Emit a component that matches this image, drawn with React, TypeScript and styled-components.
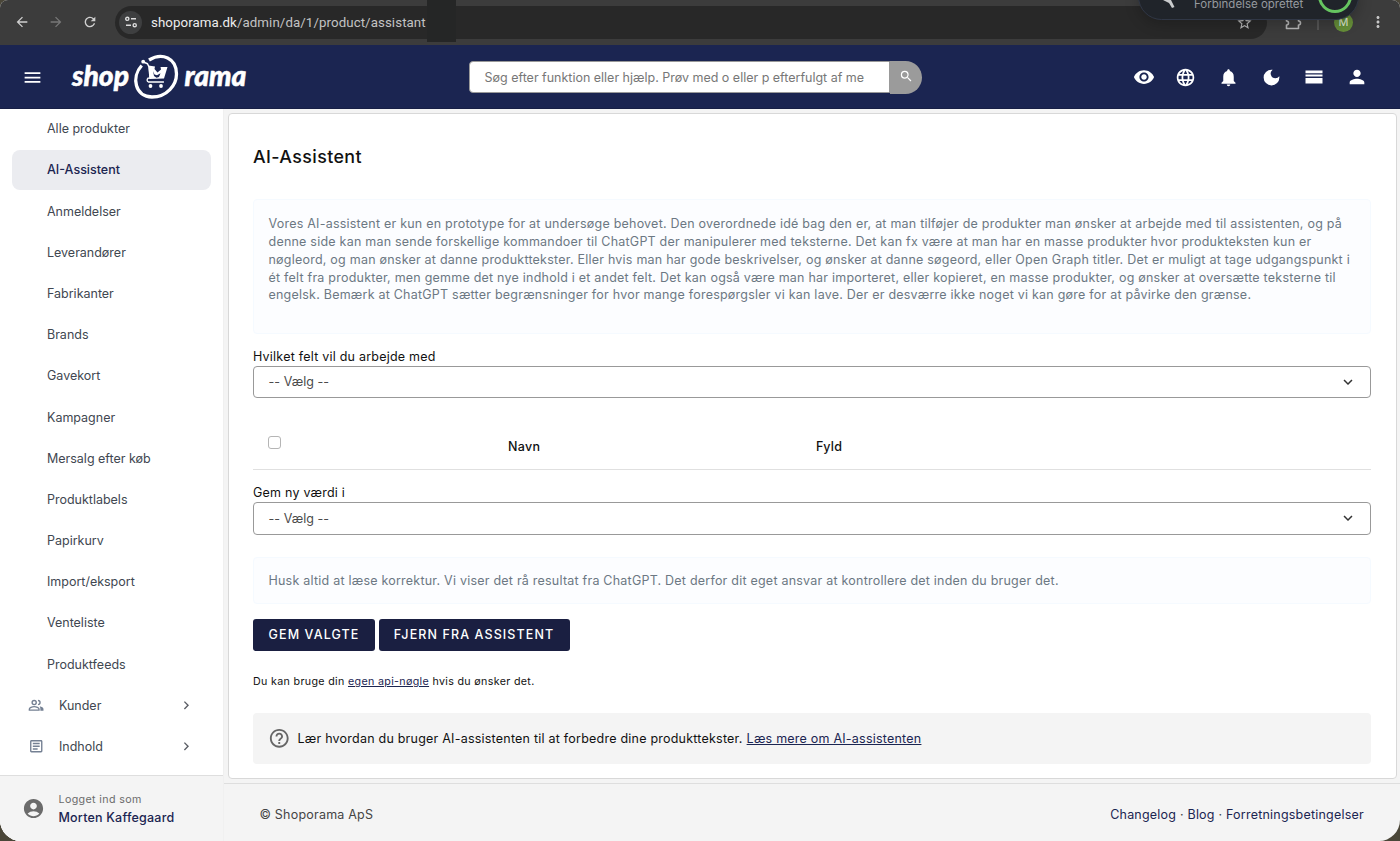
import React from "react";
import styled, { createGlobalStyle, css } from "styled-components";
import {
  MdMenu, MdVisibility, MdLanguage, MdNotifications, MdDarkMode, MdPerson, MdSearch,
  MdOutlineArticle, MdAccountCircle, MdHelpOutline, MdExpandMore,
  MdChevronRight, MdArrowBack, MdArrowForward, MdRefresh, MdStarBorder, MdMoreVert,
} from "react-icons/md";

const navy = "#1b2551";

const Global = createGlobalStyle`
  *, *::before, *::after { box-sizing: border-box; }
  body { margin: 0; background: #4a4638; font-family: Inter, "Liberation Sans", sans-serif; font-size: 12.49px; color: #111; }
  button, input { font: inherit; }
  a { color: ${navy}; }
  svg { display: block; flex: none; }
`;

const Window = styled.div`
  width: 1400px; height: 841px; overflow: hidden; display: flex; flex-direction: column;
  border-radius: 8px 8px 21px 21px; background: #f4f4f4; position: relative;
`;

/* Browser chrome */
const BrowserBar = styled.div`
  height: 44.5px; flex: none; background: #3c3c3c; color: #c7c7c7; display: flex; align-items: center;
  padding-left: 14px;
`;
const NavIcon = styled.span<{ $dim?: boolean }>`
  width: 16px; margin-right: 18px; font-size: 16px; color: ${(p) => (p.$dim ? "#777" : "#cfcfcf")};
`;
const AddressBar = styled.div`
  width: 1152px; height: 33px; border-radius: 17px; background: #282828; display: flex; align-items: center;
  padding: 0 14px 0 4px; margin-left: -1px;
`;
const SiteInfo = styled.span`
  width: 23px; height: 23px; border-radius: 50%; background: #3e3f40; display: grid; place-items: center;
  margin-right: 9px;
`;
const Url = styled.span`
  font-family: Roboto, "Liberation Sans", sans-serif; font-size: 13.3px; color: #c3c3c3; letter-spacing: 0.08px; white-space: nowrap;
  width: 275px;
  b { font-weight: 400; color: #ededed; }
`;
const UrlPatch = styled.span`width: 29px; height: 42px; margin-left: 1px; background: #252626; align-self: flex-start; margin-top: -6px; z-index: 1;`;
const StarSlot = styled.span`margin-left: auto; font-size: 17px; color: #b5b5b5;`;
const BarTools = styled.div`
  display: flex; align-items: center; flex: 1; padding-left: 18px; font-size: 18px;
`;
const BarDivider = styled.i`width: 2px; height: 15px; background: #555; margin: 0 15px 0 15px;`;
const Avatar = styled.span`
  width: 19px; height: 19px; border-radius: 50%; background: #658d38; color: #dce7d0; font-size: 11px;
  display: grid; place-items: center; margin-right: 16px;
`;
const Toast = styled.div`
  position: absolute; top: -27px; left: 1138px; width: 221px; height: 47px; border-radius: 24px;
  background: #20242a; border: 1px solid #303746; color: #969a9f; font-size: 11.5px;
  box-shadow: 0 4px 14px rgba(0,0,0,.22); z-index: 3;
`;
const ToastText = styled.span`position: absolute; left: 55px; top: 23px; white-space: nowrap; letter-spacing: 0;`;
const ToastRing = styled.i`
  position: absolute; right: 6px; top: 5px; width: 34px; height: 34px; border: 3.5px solid #66c560; border-radius: 50%;
`;
const ToastMark = styled.svg`position: absolute; left: 24px; top: 26px;`;

/* Application header */
const Header = styled.header`
  height: 64.5px; flex: none; background: ${navy}; color: #fff; display: flex; align-items: center;
  padding: 1.5px 0 0 22px; border-bottom: 1px solid #171f45;
`;
const MenuButton = styled.span`font-size: 21px; margin-right: 28px;`;
const Search = styled.div`display: flex; margin-left: 220px; width: 453px; height: 33px;`;
const SearchField = styled.div`
  width: 421px; height: 32px; background: #fff; border: 1px solid #999; border-radius: 4px 0 0 4px;
  padding: 0 20px 0 14.5px; color: #777;
  span { display: block; white-space: nowrap; line-height: 31px; letter-spacing: 0; }
`;
const SearchButton = styled.span`
  width: 32px; height: 33px; background: #9b9b9b; border-radius: 0 17px 17px 0; display: grid; place-items: center;
  font-size: 14.5px; padding-bottom: 1px;
`;
const HeaderIcons = styled.div`
  margin-left: auto; display: flex; align-items: center; padding-right: 21.5px; font-size: 20px;
  span { width: 43px; display: flex; justify-content: center; }
  span:first-child { margin-right: -2px; }
`;

/* Layout */
const Body = styled.div`flex: 1; display: flex; min-height: 0;`;
const Sidebar = styled.aside`
  width: 223.5px; flex: none; background: #fff; display: flex; flex-direction: column;
  border-right: 1px solid #f0f0f0;
`;
const Nav = styled.nav`flex: 1; padding: 0 11.5px; overflow: hidden;`;
const NavItem = styled.div<{ $active?: boolean; $top?: boolean }>`
  height: 39.4px; margin-bottom: 1.8px; border-radius: 8px; display: flex; align-items: center;
  padding: 0 17px 0 ${(p) => (p.$top ? 16 : 35.5)}px; color: #414751; white-space: nowrap;
  span { flex: 1; }
  ${(p) => p.$active && css`background: #ebecf0; color: ${navy}; font-weight: 500;`}
  svg:first-child { color: #748093; font-size: 16.5px; margin-right: 15px; }
  svg:last-child { color: #5c5f66; font-size: 16.5px; }
`;
const UserPanel = styled.div`
  height: 66px; flex: none; border-top: 1px solid #dedede; background: #f4f4f4; display: flex; align-items: center;
  padding-left: 21.5px; color: #6b6b6b; font-size: 23px;
`;
const UserText = styled.div`
  margin-left: 14px; font-size: 10.7px; line-height: 18px; letter-spacing: .36px;
  strong { display: block; font-size: 12.49px; font-weight: 500; color: ${navy}; letter-spacing: .22px; }
`;
const Main = styled.main`flex: 1; display: flex; flex-direction: column; padding-top: 4px; min-width: 0;`;
const Card = styled.section`
  height: 666px; flex: none; margin: 0 3.5px 0 4px; border: 1px solid #d8d8d8; border-radius: 4px;
  background: #fff; padding: 0 25px 0 24.5px; display: flex; flex-direction: column; letter-spacing: .232px;
`;
const Title = styled.h1`
  margin: 31px 0 30px; height: 24px; line-height: 24px; font-size: 17.84px; font-weight: 450; letter-spacing: .4px;
`;
const Info = styled.div<{ $h: number; $top?: number; $pad?: number }>`
  height: ${(p) => p.$h}px; margin-top: ${(p) => p.$top ?? 0}px; flex: none; background: #fcfdff; border: 1px solid #f5faff; border-radius: 4px;
  padding: ${(p) => p.$pad ?? 15}px 14.5px 0; color: #6c7883; line-height: 17.85px; white-space: nowrap;
`;
const Label = styled.label<{ $top: number }>`
  margin-top: ${(p) => p.$top}px; height: 18px; flex: none; line-height: 18px; color: #111;
`;
const Select = styled.div`
  height: 32.5px; flex: none; border: 1px solid #999; border-radius: 4px; display: flex; align-items: center;
  justify-content: space-between; padding: 0 13px 0 14.5px; color: #4b4b4b; letter-spacing: .05px;
  svg { font-size: 18px; color: #333; }
`;
const TableHead = styled.div`
  margin-top: 23.5px; height: 48px; flex: none; border-bottom: 1px solid #e0e0e0; display: grid;
  grid-template-columns: 255px 308px 1fr; font-weight: 500; letter-spacing: .3px; line-height: 50px;
`;
const Checkbox = styled.i`width: 13px; height: 13px; border: 1px solid #b5b5b5; border-radius: 3px; margin: 14.500px 0 0 14.500px;`;
const Buttons = styled.div`display: flex; gap: 3.5px; margin-top: 14.500px; flex: none;`;
const Button = styled.button<{ $w: number }>`
  width: ${(p) => p.$w}px; height: 32.500px; padding: 0; border: 0; border-radius: 3px; background: #1a1f41; color: #fff;
  font-weight: 500; letter-spacing: 1.115px; white-space: nowrap;
`;
const Note = styled.p`margin: 22px 0 21.500px; height: 18px; line-height: 18px; font-size: 10.7px; letter-spacing: .33px;`;
const Help = styled.div`
  height: 51.5px; flex: none; background: #f4f4f4; border-radius: 4px; display: flex; align-items: center;
  padding-left: 15px;
  svg { font-size: 22.5px; color: #666; margin-right: 7px; }
  a { margin-left: 4px; }
`;
const HelpText = styled.span`padding-top: 1px;`;
const Footer = styled.footer`
  flex: 1; margin-top: 4px; border-top: 1px solid #dedede; display: flex; align-items: center; justify-content: space-between;
  padding: 4px 36px 0 36px; color: #444; letter-spacing: .223px;
  a { text-decoration: none; }
`;

const Logo = () => (
  <svg width="178" height="48" viewBox="0 0 178 48" fill="#fff" overflow="visible">
    <g fontFamily="Lato, sans-serif" fontWeight="900" fontStyle="italic" fontSize="28.500" stroke="#fff" strokeWidth=".500">
      <text x="1" y="32.500" textLength="57" lengthAdjust="spacingAndGlyphs">shop</text>
      <text x="113.500" y="32.500" textLength="62" lengthAdjust="spacingAndGlyphs">rama</text>
    </g>
    <path d="M70.700 12.500C60 24 64 44 81 44C96 44 105.500 32 105.500 21C105.500 5 91-1 78 7" fill="none" stroke="#fff" strokeWidth="3.300" />
    <circle cx="72.200" cy="8.700" r="1.900" />
    <path d="M72.500 9l4 1.800 1.500 3.200 1 10.500" fill="none" stroke="#fff" strokeWidth="1.500" strokeLinecap="round" strokeLinejoin="round" />
    <path d="M77.500 12.500l6.500 1-.5 2.500 3 3.500 3.500-3-.5-2.500 7 0-3.500 11.500-14.500.5z" />
    <path d="M82 18l1.500 3.500 2.500.7 3.500-2-1.500 3.800-2.500.8-2.500-1.800z" fill={navy} />
    <path d="M79 25.200h-2q-2 2.300.5 3.800h15" fill="none" stroke="#fff" strokeWidth="1.300" strokeLinecap="round" />
    <circle cx="79.500" cy="33" r="1.900" /><circle cx="90" cy="33" r="1.900" />
  </svg>
);

const PeopleIcon = () => (
  <svg width="16.500" height="16.500" viewBox="0 0 24 24" fill="none" stroke="currentColor" strokeWidth="2">
    <circle cx="9" cy="8" r="3" />
    <path d="M2 19v-1.500c0-2 4-3.500 7-3.500s7 1.500 7 3.500V19z" />
    <path d="M14.500 5a3 3 0 0 1 0 6" />
    <path d="M17 13.500c3 .6 5.500 2 5.500 4V20H18v-2.500c0-1.600-.4-2.900-1-4z" fill="currentColor" stroke="none" />
  </svg>
);

const PuzzleIcon = () => (
  <svg width="17" height="18" viewBox="0 0 17 18" fill="none" stroke="#b5b5b5" strokeWidth="1.600" strokeLinejoin="round">
    <path d="M1.500 4.500H5a2 2 0 0 1 4 0h4.500V8a2 2 0 0 1 0 4v3.500h-12V12a2 2 0 0 0 0-4z" />
  </svg>
);

const products = [
  "Alle produkter", "AI-Assistent", "Anmeldelser", "Leverandører", "Fabrikanter", "Brands", "Gavekort", "Kampagner",
  "Mersalg efter køb", "Produktlabels", "Papirkurv", "Import/eksport", "Venteliste", "Produktfeeds",
];

const intro = [
  "Vores AI-assistent er kun en prototype for at undersøge behovet. Den overordnede idé bag den er, at man tilføjer de produkter man ønsker at arbejde med til assistenten, og på",
  "denne side kan man sende forskellige kommandoer til ChatGPT der manipulerer med teksterne. Det kan fx være at man har en masse produkter hvor produkteksten kun er",
  "nøgleord, og man ønsker at danne produkttekster. Eller hvis man har gode beskrivelser, og ønsker at danne søgeord, eller Open Graph titler. Det er muligt at tage udgangspunkt i",
  "ét felt fra produkter, men gemme det nye indhold i et andet felt. Det kan også være man har importeret, eller kopieret, en masse produkter, og ønsker at oversætte teksterne til",
  "engelsk. Bemærk at ChatGPT sætter begrænsninger for hvor mange forespørgsler vi kan lave. Der er desværre ikke noget vi kan gøre for at påvirke den grænse.",
];

export default function App() {
  return (
    <>
      <Global />
      <Window>
        <BrowserBar>
          <NavIcon><MdArrowBack /></NavIcon>
          <NavIcon $dim><MdArrowForward /></NavIcon>
          <NavIcon><MdRefresh /></NavIcon>
          <AddressBar>
            <SiteInfo>
              <svg width="12" height="12" viewBox="0 0 12 12" fill="none" stroke="#ddd" strokeWidth="1.400">
                <circle cx="2.300" cy="2.800" r="1.600" /><path d="M6 2.800h5M1 9.200h5" /><circle cx="9.700" cy="9.200" r="1.600" />
              </svg>
            </SiteInfo>
            <Url><b>shoporama.dk</b>/admin/da/1/product/assistant</Url>
            <UrlPatch />
            <StarSlot><MdStarBorder /></StarSlot>
          </AddressBar>
          <BarTools>
            <PuzzleIcon />
            <BarDivider />
            <Avatar>M</Avatar>
            <MdMoreVert />
          </BarTools>
        </BrowserBar>
        <Toast>
          <ToastMark width="14" height="9" viewBox="0 0 14 9" fill="#c8cacc"><path d="M0 0h8l3.500 7-2.500 1-3-5z" /></ToastMark>
          <ToastText>Forbindelse oprettet</ToastText>
          <ToastRing />
        </Toast>
        <Header>
          <MenuButton><MdMenu /></MenuButton>
          <Logo />
          <Search>
            <SearchField><span>Søg efter funktion eller hjælp. Prøv med o eller p efterfulgt af me</span></SearchField>
            <SearchButton><MdSearch /></SearchButton>
          </Search>
          <HeaderIcons>
            <span><MdVisibility size={22} /></span>
            <span><MdLanguage size={21} /></span>
            <span><MdNotifications size={21} /></span>
            <span><MdDarkMode size={21} /></span>
            <span>
              <svg width="18" height="14" viewBox="0 0 18 14" fill="#fff"><path d="M.5.500h17v2.700H.5zM.5 4.500h17v2H.5zM.5 8h17v5.500H.5z" /></svg>
            </span>
            <span><MdPerson size={22} /></span>
          </HeaderIcons>
        </Header>
        <Body>
          <Sidebar>
            <Nav>
              {products.map((name) => (
                <NavItem key={name} $active={name === "AI-Assistent"}><span>{name}</span></NavItem>
              ))}
              <NavItem $top><PeopleIcon /><span>Kunder</span><MdChevronRight /></NavItem>
              <NavItem $top><MdOutlineArticle /><span>Indhold</span><MdChevronRight /></NavItem>
            </Nav>
            <UserPanel>
              <MdAccountCircle />
              <UserText>Logget ind som<strong>Morten Kaffegaard</strong></UserText>
            </UserPanel>
          </Sidebar>
          <Main>
            <Card>
              <Title>AI-Assistent</Title>
              <Info $h={134.5}>{intro.map((line) => <div key={line}>{line}</div>)}</Info>
              <Label $top={14}>Hvilket felt vil du arbejde med</Label>
              <Select>-- Vælg --<MdExpandMore /></Select>
              <TableHead><Checkbox /><span>Navn</span><span>Fyld</span></TableHead>
              <Label $top={14.5}>Gem ny værdi i</Label>
              <Select>-- Vælg --<MdExpandMore /></Select>
              <Info $h={47.5} $top={22} $pad={14}>
                Husk altid at læse korrektur. Vi viser det rå resultat fra ChatGPT. Det derfor dit eget ansvar at kontrollere det inden du bruger det.
              </Info>
              <Buttons>
                <Button $w={122}>GEM VALGTE</Button>
                <Button $w={191}>FJERN FRA ASSISTENT</Button>
              </Buttons>
              <Note>Du kan bruge din <a href="#">egen api-nøgle</a> hvis du ønsker det.</Note>
              <Help>
                <MdHelpOutline />
                <HelpText>
                  Lær hvordan du bruger AI-assistenten til at forbedre dine produkttekster.<a href="#">Læs mere om AI-assistenten</a>
                </HelpText>
              </Help>
            </Card>
            <Footer>
              <span>© Shoporama ApS</span>
              <span><a href="#">Changelog</a> · <a href="#">Blog</a> · <a href="#">Forretningsbetingelser</a></span>
            </Footer>
          </Main>
        </Body>
      </Window>
    </>
  );
}
